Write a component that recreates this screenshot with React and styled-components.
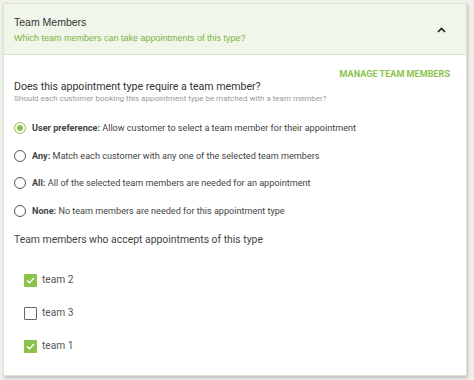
import React, { useState } from "react";
import styled, { createGlobalStyle } from "styled-components";

const Global = createGlobalStyle`
  html, body {
    margin: 0;
    background: #efefec;
    font-family: Roboto, "Liberation Sans", sans-serif;
  }
`;

const Page = styled.div`
  width: 474px;
  height: 380px;
  padding: 3px 0 0 3px;
  box-sizing: border-box;
`;

const Card = styled.div`
  width: 464px;
  height: 373px;
  box-sizing: border-box;
  background: #fff;
  border: 1px solid #d9e3cd;
  box-shadow: 1px 2px 3px rgba(0, 0, 0, 0.2);
  display: flex;
  flex-direction: column;
`;

const Header = styled.div`
  background: #f1f6ea;
  border-bottom: 1px solid #d6e3c6;
  height: 51px;
  box-sizing: border-box;
  display: flex;
  align-items: center;
  justify-content: space-between;
  padding: 1px 20px 0 10px;
  font-family: "Liberation Sans", Arial, sans-serif;
`;

const Title = styled.div`
  font-size: 10.5px;
  color: #333;
  line-height: 13px;
`;

const Subtitle = styled.div`
  font-size: 9px;
  color: #7cb342;
  line-height: 12px;
  margin-top: 3px;
`;

const Body = styled.div`
  padding: 13px 16px 0 10px;
  display: flex;
  flex-direction: column;
`;

const ManageLink = styled.a`
  align-self: flex-end;
  font-size: 9.1px;
  font-weight: 700;
  color: #8bc34a;
  line-height: 12px;
`;

const Question = styled.div`
  font-size: 10.6px;
  color: #333;
  line-height: 14px;
`;

const Hint = styled.div`
  font-size: 8px;
  color: #999;
  line-height: 10px;
`;

const RadioList = styled.div`
  display: flex;
  flex-direction: column;
  gap: 13.5px;
  margin-top: 17px;
`;

const RadioRow = styled.label`
  display: flex;
  align-items: center;
  gap: 6px;
  font-size: 9.1px;
  color: #444;
  line-height: 14px;
  height: 14px;
  cursor: pointer;
`;

const RadioDot = styled.span`
  width: 12px;
  height: 12px;
  border-radius: 50%;
  box-sizing: border-box;
  border: 1.3px solid ${(p) => (p.checked ? "#8bc34a" : "#555")};
  display: flex;
  align-items: center;
  justify-content: center;
  flex-shrink: 0;
  &::after {
    content: "";
    width: 6px;
    height: 6px;
    border-radius: 50%;
    background: ${(p) => (p.checked ? "#8bc34a" : "transparent")};
  }
`;

const SectionLabel = styled.div`
  font-size: 10.4px;
  color: #444;
  line-height: 14px;
  margin-top: 15.5px;
`;

const CheckList = styled.div`
  display: flex;
  flex-direction: column;
  gap: 19px;
  margin-top: 26px;
  padding-left: 10px;
`;

const CheckRow = styled.label`
  display: flex;
  align-items: center;
  gap: 5px;
  font-size: 10.2px;
  color: #555;
  line-height: 14px;
  height: 14px;
  cursor: pointer;
`;

const Box = styled.span`
  width: 13px;
  height: 13px;
  box-sizing: border-box;
  border-radius: 1px;
  border: ${(p) => (p.checked ? "none" : "1.4px solid #666")};
  background: ${(p) => (p.checked ? "#8bc34a" : "#fff")};
  display: flex;
  align-items: center;
  justify-content: center;
  flex-shrink: 0;
`;

const options = [
  { key: "user", bold: "User preference:", text: "Allow customer to select a team member for their appointment" },
  { key: "any", bold: "Any:", text: "Match each customer with any one of the selected team members" },
  { key: "all", bold: "All:", text: "All of the selected team members are needed for an appointment" },
  { key: "none", bold: "None:", text: "No team members are needed for this appointment type" },
];

const teams = [
  { name: "team 2", on: true },
  { name: "team 3", on: false },
  { name: "team 1", on: true },
];

export default function App() {
  const [choice, setChoice] = useState("user");
  const [members, setMembers] = useState(teams);

  const toggle = (i) =>
    setMembers(members.map((m, j) => (j === i ? { ...m, on: !m.on } : m)));

  return (
    <Page>
      <Global />
      <Card>
        <Header>
          <div>
            <Title>Team Members</Title>
            <Subtitle>Which team members can take appointments of this type?</Subtitle>
          </div>
          <svg width="9" height="6" viewBox="0 0 9 6">
            <path d="M1 5 L4.5 1.5 L8 5" fill="none" stroke="#222" strokeWidth="1.7" />
          </svg>
        </Header>
        <Body>
          <ManageLink>MANAGE TEAM MEMBERS</ManageLink>
          <Question>Does this appointment type require a team member?</Question>
          <Hint>Should each customer booking this appointment type be matched with a team member?</Hint>
          <RadioList>
            {options.map((o) => (
              <RadioRow key={o.key} onClick={() => setChoice(o.key)}>
                <RadioDot checked={choice === o.key} />
                <span>
                  <b>{o.bold}</b> {o.text}
                </span>
              </RadioRow>
            ))}
          </RadioList>
          <SectionLabel>Team members who accept appointments of this type</SectionLabel>
          <CheckList>
            {members.map((m, i) => (
              <CheckRow key={m.name} onClick={() => toggle(i)}>
                <Box checked={m.on}>
                  {m.on && (
                    <svg width="9" height="7" viewBox="0 0 9 7">
                      <path d="M1 3.5 L3.4 5.8 L8 1" fill="none" stroke="#fff" strokeWidth="1.4" />
                    </svg>
                  )}
                </Box>
                {m.name}
              </CheckRow>
            ))}
          </CheckList>
        </Body>
      </Card>
    </Page>
  );
}
